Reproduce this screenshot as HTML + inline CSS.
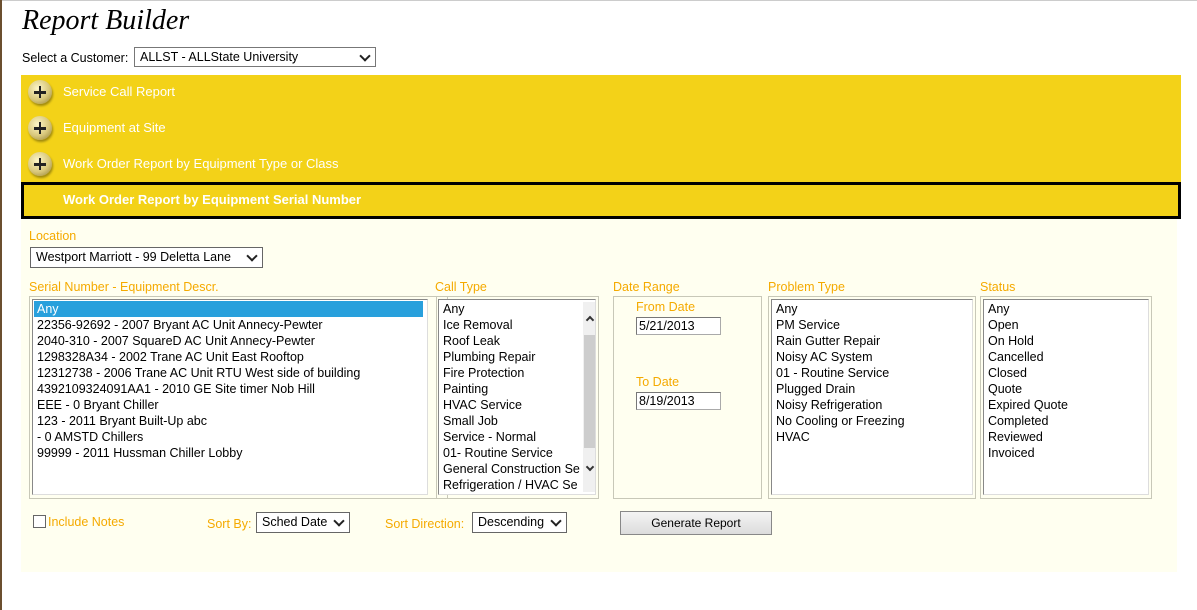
<!DOCTYPE html>
<html><head><meta charset="utf-8"><style>
*{box-sizing:border-box;margin:0;padding:0}
body{width:1197px;height:610px;background:#fff;position:relative;overflow:hidden;font-family:"Liberation Sans",sans-serif;font-size:13px;color:#000}
.a{position:absolute}
.lbl{position:absolute;color:#f5aa00;font-size:12.5px}
.row{position:absolute;left:21px;width:1160px;height:36px;background:#f3d218;color:#fff;font-size:13px}
.row span{position:absolute;left:42px;top:9px}
.plus{position:absolute;left:7px;top:5px;width:24px;height:24px;border-radius:50%;background:radial-gradient(circle at 40% 35%,#fdf6c8,#d8c77a 55%,#8c7a30);box-shadow:1px 2px 2px rgba(0,0,0,.35)}
.plus:before{content:"";position:absolute;left:6px;top:11px;width:12px;height:2.5px;background:#222}
.plus:after{content:"";position:absolute;left:10.8px;top:6px;width:2.5px;height:12px;background:#222}
.box{position:absolute;border:1px solid #c8c8b8}
.list{position:absolute;border:1px solid #888;background:#fff;border-right-color:#ddd;border-bottom-color:#ddd;overflow:hidden}
.list div{height:16px;line-height:16px;padding-left:4px;white-space:nowrap;font-size:12.5px}
.sel{position:absolute;border:1px solid #666;background:#fff;font-size:12.5px;padding-left:5px;line-height:18px}
.sel:after{content:"";position:absolute;right:6px;top:4px;width:6px;height:6px;border-right:2px solid #222;border-bottom:2px solid #222;transform:rotate(45deg)}
.inp{position:absolute;border:1px solid #aaa;border-top-color:#777;border-left-color:#777;background:#fff;font-size:12.5px;padding-left:2px;line-height:16px}
</style></head><body>
<div class="a" style="left:0;top:0;width:1197px;height:1px;background:#ccc"></div>
<div class="a" style="left:0;top:0;width:2px;height:610px;background:#6b4f2f"></div>
<div class="a" style="left:22px;top:5px;font-family:'Liberation Serif',serif;font-style:italic;font-size:28px">Report Builder</div>
<div class="a" style="left:22px;top:51px;font-size:12.5px">Select a Customer:</div>
<div class="sel" style="left:134px;top:47px;width:242px;height:20px;border-color:#777">ALLST - ALLState University</div>

<div class="row" style="top:75px"><div class="plus"></div><span>Service Call Report</span></div>
<div class="row" style="top:111px"><div class="plus"></div><span>Equipment at Site</span></div>
<div class="row" style="top:147px"><div class="plus"></div><span>Work Order Report by Equipment Type or Class</span></div>
<div class="row" style="top:182px;height:37px;border:3px solid #000"><span style="left:39px;top:7px;font-weight:bold">Work Order Report by Equipment Serial Number</span></div>

<div class="a" style="left:21px;top:219px;width:1156px;height:353px;background:#fffff0"></div>

<div class="lbl" style="left:29px;top:229px">Location</div>
<div class="sel" style="left:30px;top:247px;width:233px;height:21px">Westport Marriott - 99 Deletta Lane</div>

<div class="lbl" style="left:29px;top:280px">Serial Number - Equipment Descr.</div>
<div class="box" style="left:29px;top:296px;width:419px;height:203px"></div>
<div class="list" style="left:32px;top:299px;width:396px;height:196px;padding-top:1px">
<div style="background:#28a0dc;color:#fff;margin:0 4px 0 1px;padding-left:3px">Any</div>
<div>22356-92692 - 2007 Bryant AC Unit Annecy-Pewter</div>
<div>2040-310 - 2007 SquareD AC Unit Annecy-Pewter</div>
<div>1298328A34 - 2002 Trane AC Unit East Rooftop</div>
<div>12312738 - 2006 Trane AC Unit RTU West side of building</div>
<div>4392109324091AA1 - 2010 GE Site timer Nob Hill</div>
<div>EEE - 0 Bryant Chiller</div>
<div>123 - 2011 Bryant Built-Up abc</div>
<div>- 0 AMSTD Chillers</div>
<div>99999 - 2011 Hussman Chiller Lobby</div>
</div>

<div class="lbl" style="left:435px;top:280px">Call Type</div>
<div class="box" style="left:436px;top:296px;width:163px;height:203px"></div>
<div class="list" style="left:438px;top:299px;width:158px;height:196px;padding-top:1px">
<div>Any</div><div>Ice Removal</div><div>Roof Leak</div><div>Plumbing Repair</div><div>Fire Protection</div><div>Painting</div><div>HVAC Service</div><div>Small Job</div><div>Service - Normal</div><div>01- Routine Service</div><div>General Construction Se</div><div>Refrigeration / HVAC Se</div>
<div class="a" style="left:144px;top:2px;width:13px;height:190px;background:#f0f0f0"></div>
<div class="a" style="left:145px;top:35px;width:12px;height:113px;background:#cdcdcd"></div>
<div class="a" style="left:148px;top:17px;width:6px;height:6px;border-left:2px solid #333;border-top:2px solid #333;transform:rotate(45deg);padding:0"></div>
<div class="a" style="left:148px;top:164px;width:6px;height:6px;border-right:2px solid #333;border-bottom:2px solid #333;transform:rotate(45deg);padding:0"></div>
</div>

<div class="lbl" style="left:613px;top:280px">Date Range</div>
<div class="box" style="left:613px;top:296px;width:149px;height:203px"></div>
<div class="lbl" style="left:636px;top:300px">From Date</div>
<div class="inp" style="left:636px;top:317px;width:85px;height:18px">5/21/2013</div>
<div class="lbl" style="left:636px;top:375px">To Date</div>
<div class="inp" style="left:636px;top:392px;width:85px;height:18px">8/19/2013</div>

<div class="lbl" style="left:768px;top:280px">Problem Type</div>
<div class="box" style="left:768px;top:296px;width:208px;height:203px"></div>
<div class="list" style="left:771px;top:299px;width:202px;height:196px;padding-top:1px">
<div>Any</div><div>PM Service</div><div>Rain Gutter Repair</div><div>Noisy AC System</div><div>01 - Routine Service</div><div>Plugged Drain</div><div>Noisy Refrigeration</div><div>No Cooling or Freezing</div><div>HVAC</div>
</div>

<div class="lbl" style="left:980px;top:280px">Status</div>
<div class="box" style="left:980px;top:296px;width:172px;height:203px"></div>
<div class="list" style="left:983px;top:299px;width:166px;height:196px;padding-top:1px">
<div>Any</div><div>Open</div><div>On Hold</div><div>Cancelled</div><div>Closed</div><div>Quote</div><div>Expired Quote</div><div>Completed</div><div>Reviewed</div><div>Invoiced</div>
</div>

<div class="a" style="left:33px;top:515px;width:13px;height:13px;border:1px solid #666;background:#fff"></div>
<div class="lbl" style="left:48px;top:515px">Include Notes</div>
<div class="lbl" style="left:207px;top:517px">Sort By:</div>
<div class="sel" style="left:256px;top:512px;width:94px;height:21px">Sched Date</div>
<div class="lbl" style="left:385px;top:517px">Sort Direction:</div>
<div class="sel" style="left:472px;top:512px;width:95px;height:21px">Descending</div>
<div class="a" style="left:620px;top:511px;width:152px;height:24px;border:1px solid #888;background:linear-gradient(#f4f4f4,#dcdcdc);font-size:12px;text-align:center;line-height:22px">Generate Report</div>
</body></html>
